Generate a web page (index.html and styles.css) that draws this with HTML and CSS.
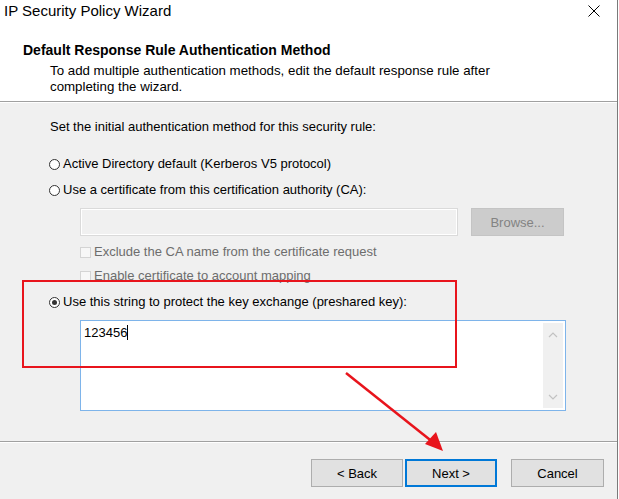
FILE: index.html
```html
<!DOCTYPE html>
<html>
<head>
<meta charset="utf-8">
<link rel="stylesheet" href="styles.css">
</head>
<body>
<div class="window">
  <div class="top">
    <div class="titlebar">
      <span class="title">IP Security Policy Wizard</span>
      <svg class="close" width="12" height="12" viewBox="0 0 12 12"><path d="M0.5 0.5 L11.5 11.5 M11.5 0.5 L0.5 11.5" stroke="#000" stroke-width="1"/></svg>
    </div>
    <div class="header">
      <div class="heading">Default Response Rule Authentication Method</div>
      <div class="sub">To add multiple authentication methods, edit the default response rule after<br>completing the wizard.</div>
    </div>
  </div>
  <div class="content">
    <div class="prompt">Set the initial authentication method for this security rule:</div>
    <div class="opt opt1"><span class="radio"></span>Active Directory default (Kerberos V5 protocol)</div>
    <div class="opt opt2"><span class="radio"></span>Use a certificate from this certification authority (CA):</div>
    <div class="ca-row">
      <div class="ca-box"></div>
      <div class="browse">Browse...</div>
    </div>
    <div class="chk chk1"><span class="box"></span>Exclude the CA name from the certificate request</div>
    <div class="chk chk2"><span class="box"></span>Enable certificate to account mapping</div>
    <div class="opt opt3"><span class="radio checked"></span>Use this string to protect the key exchange (preshared key):</div>
    <div class="keybox">
      <div class="keytext">123456<span class="caret"></span></div>
      <div class="scroll">
        <svg width="10" height="6" viewBox="0 0 10 6"><path d="M1 5 L5 1 L9 5" fill="none" stroke="#c2c2c2" stroke-width="1.2"/></svg>
        <svg width="10" height="6" viewBox="0 0 10 6"><path d="M1 1 L5 5 L9 1" fill="none" stroke="#c2c2c2" stroke-width="1.2"/></svg>
      </div>
    </div>
  </div>
  <div class="footer">
    <div class="btn">&lt; Back</div>
    <div class="btn default">Next &gt;</div>
    <div class="btn cancel">Cancel</div>
  </div>
  <div class="highlight"></div>
  <svg class="arrow" width="619" height="499" viewBox="0 0 619 499">
    <line x1="346" y1="373" x2="434" y2="443" stroke="#e8141c" stroke-width="2.5"/>
    <polygon points="443,451 425,444 436,432" fill="#e8141c"/>
  </svg>
</div>
</body>
</html>
```

FILE: styles.css
```css
html, body {
  margin: 0;
  padding: 0;
  background: #ffffff;
}
body {
  font-family: "Liberation Sans", Arial, sans-serif;
  font-size: 13px;
  color: #000;
}
.window {
  position: relative;
  width: 617px;
  height: 499px;
  border-right: 1px solid #7a7a7a;
  background: #f0f0f0;
  display: flex;
  flex-direction: column;
  overflow: hidden;
}
.top {
  background: #ffffff;
  height: 101px;
  border-bottom: 1px solid #a0a0a0;
  box-shadow: 0 1px 0 #ffffff;
}
.titlebar {
  height: 30px;
  display: flex;
  justify-content: space-between;
  align-items: flex-start;
  padding: 0 17px 0 4px;
}
.title {
  font-size: 15px;
  line-height: 22px;
}
.close {
  margin-top: 5px;
}
.header {
  padding: 12px 0 0 23px;
}
.heading {
  font-weight: bold;
  font-size: 14px;
  line-height: 16px;
}
.sub {
  margin-top: 5px;
  padding-left: 27px;
  font-size: 13.3px;
  line-height: 16px;
}
.content {
  height: 339px;
  margin-top: 1px;
  padding: 16px 0 0 0;
  box-sizing: border-box;
  display: flex;
  flex-direction: column;
  border-bottom: 1px solid #a0a0a0;
}
.prompt {
  padding-left: 50px;
  line-height: 16px;
}
.opt {
  display: flex;
  align-items: center;
  padding-left: 49px;
  line-height: 16px;
}
.opt1 { margin-top: 21px; }
.opt2 { margin-top: 10px; }
.opt3 { margin-top: 10px; }
.radio {
  width: 9px;
  height: 9px;
  border: 1px solid #333333;
  border-radius: 50%;
  background: #ffffff;
  margin-right: 3px;
  position: relative;
}
.radio.checked::after {
  content: "";
  position: absolute;
  left: 2px;
  top: 2px;
  width: 5px;
  height: 5px;
  border-radius: 50%;
  background: #333333;
}
.ca-row {
  display: flex;
  margin-top: 10px;
  padding-left: 80px;
  gap: 13px;
}
.ca-box {
  width: 378px;
  height: 28px;
  box-sizing: border-box;
  border: 1px solid #dadada;
  box-shadow: inset 0 0 0 1px #ffffff;
  background: #f0f0f0;
}
.browse {
  width: 93px;
  height: 28px;
  box-sizing: border-box;
  background: #cccccc;
  color: #838383;
  display: flex;
  align-items: center;
  justify-content: center;
  border: 1px solid #c4c4c4;
}
.chk {
  display: flex;
  align-items: center;
  padding-left: 80px;
  line-height: 16px;
  color: #6d6d6d;
  margin-top: 8px;
}
.box {
  width: 9px;
  height: 9px;
  border: 1px solid #d4d4d4;
  background: #f7f7f7;
  margin-right: 3px;
}
.keybox {
  margin: 10px 0 0 80px;
  width: 486px;
  height: 91px;
  box-sizing: border-box;
  border: 1px solid #7eb4ea;
  background: #ffffff;
  display: flex;
  justify-content: space-between;
}
.keytext {
  padding: 4px 0 0 3px;
  line-height: 16px;
  color: #000;
}
.caret {
  display: inline-block;
  width: 1px;
  height: 15px;
  background: #000;
  vertical-align: -3px;
}
.scroll {
  width: 20px;
  margin: 2px 2px 2px 0;
  background: #f0f0f0;
  display: flex;
  flex-direction: column;
  justify-content: space-between;
  align-items: center;
  padding: 9px 0 8px;
  box-sizing: border-box;
}
.footer {
  flex: 1;
  border-top: 1px solid #ffffff;
  display: flex;
  padding: 16px 0 0 311px;
  gap: 2px;
}
.btn {
  width: 92px;
  height: 28px;
  box-sizing: border-box;
  background: #e1e1e1;
  border: 1px solid #adadad;
  display: flex;
  align-items: center;
  justify-content: center;
}
.btn.default {
  border: 2px solid #0078d7;
}
.btn.cancel {
  margin-left: 12px;
  width: 93px;
}
.highlight {
  position: absolute;
  left: 22px;
  top: 280px;
  width: 431px;
  height: 84px;
  border: 2px solid #e8141c;
}
.arrow {
  position: absolute;
  left: 0;
  top: 0;
  pointer-events: none;
}
```
